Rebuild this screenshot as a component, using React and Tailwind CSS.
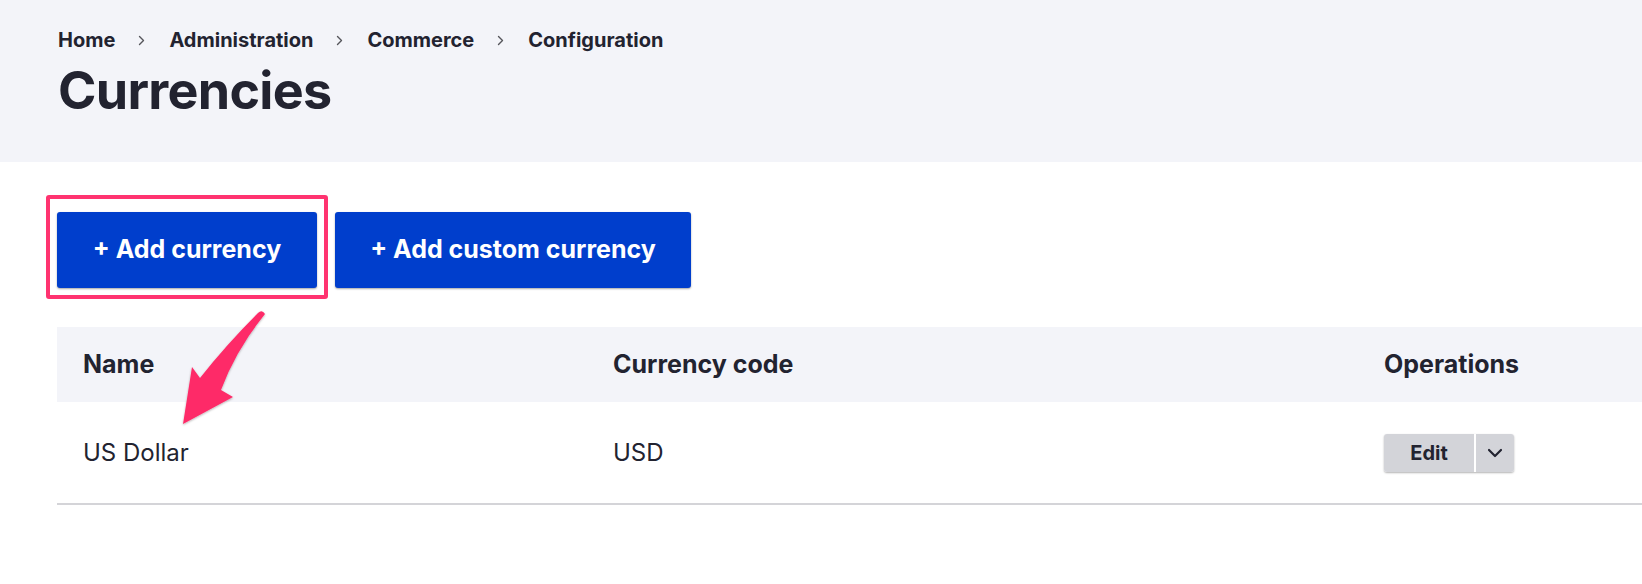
import React from "react";

const font = { fontFamily: "Inter, 'Noto Sans', sans-serif" };

function Sep() {
  return (
    <svg width="7" height="11" viewBox="0 0 7 11" className="ml-[23px] mr-[24px]">
      <path d="M1.5 1.5 L5.5 5.5 L1.5 9.5" fill="none" stroke="#55565b" strokeWidth="1.4" strokeLinecap="round" strokeLinejoin="round" />
    </svg>
  );
}

export default function App() {
  return (
    <div className="relative w-[1642px] h-[584px] bg-white text-[#222330] overflow-hidden" style={font}>
      <header className="h-[162px] bg-[#f3f4f9] pl-[58px] pt-[28px]">
        <nav className="flex items-center text-[20px] leading-[24px] font-bold">
          <span>Home</span>
          <Sep />
          <span>Administration</span>
          <Sep />
          <span>Commerce</span>
          <Sep />
          <span>Configuration</span>
        </nav>
        <h1 className="mt-[9px] text-[52px] leading-[60px] font-bold tracking-[-0.7px]">Currencies</h1>
      </header>

      <main className="pl-[57px]">
        <div className="flex gap-[18px] pt-[50px]">
          <div className="relative">
            <div className="absolute -left-[11px] -top-[17px] w-[282px] h-[104px] border-[4px] border-[#ff3370] rounded-[3px]" />
            <button className="w-[260px] h-[76px] bg-[#003ecc] text-white text-[25px] font-bold rounded-[3px] shadow-[0_1px_2px_rgba(0,0,0,0.35)]">
              + Add currency
            </button>
          </div>
          <button className="w-[356px] h-[76px] bg-[#003ecc] text-white text-[25px] font-bold rounded-[3px] shadow-[0_1px_2px_rgba(0,0,0,0.35)]">
            + Add custom currency
          </button>
        </div>

        <div className="mt-[39px]">
          <div className="grid grid-cols-[530px_771px_1fr] h-[75px] items-center bg-[#f3f4f9] text-[25px] font-bold">
            <div className="pl-[26px]">Name</div>
            <div className="pl-[26px]">Currency code</div>
            <div className="pl-[26px]">Operations</div>
          </div>
          <div className="grid grid-cols-[530px_771px_1fr] h-[103px] items-center border-b-2 border-[#d4d4d8] text-[24px]">
            <div className="pl-[26px]">US Dollar</div>
            <div className="pl-[26px]">USD</div>
            <div className="pl-[26px] flex">
              <div className="flex h-[38px] rounded-[3px] overflow-hidden shadow-[0_1px_2px_rgba(0,0,0,0.3)]">
                <button className="w-[90px] h-full bg-[#d3d4d9] text-[20px] font-bold">Edit</button>
                <div className="w-[2px] bg-white" />
                <button className="w-[38px] h-full bg-[#d3d4d9] flex items-center justify-center">
                  <svg width="16" height="10" viewBox="0 0 16 10">
                    <path d="M2 2 L8 8 L14 2" fill="none" stroke="#222330" strokeWidth="2.2" strokeLinecap="round" strokeLinejoin="round" />
                  </svg>
                </button>
              </div>
            </div>
          </div>
        </div>
      </main>

      <svg className="absolute inset-0 pointer-events-none" width="1642" height="584" viewBox="0 0 1642 584">
        <defs>
          <filter id="sh" x="-20%" y="-20%" width="140%" height="140%">
            <feDropShadow dx="0" dy="1" stdDeviation="1.2" floodColor="#000" floodOpacity="0.3" />
          </filter>
        </defs>
        <path
          d="M258 313 Q262 309 265 314 Q236 350 221 390 L233 397 L183 424 L192 367 L200 378 Q226 345 258 313 Z"
          fill="#fe2b68"
          filter="url(#sh)"
        />
      </svg>
    </div>
  );
}
